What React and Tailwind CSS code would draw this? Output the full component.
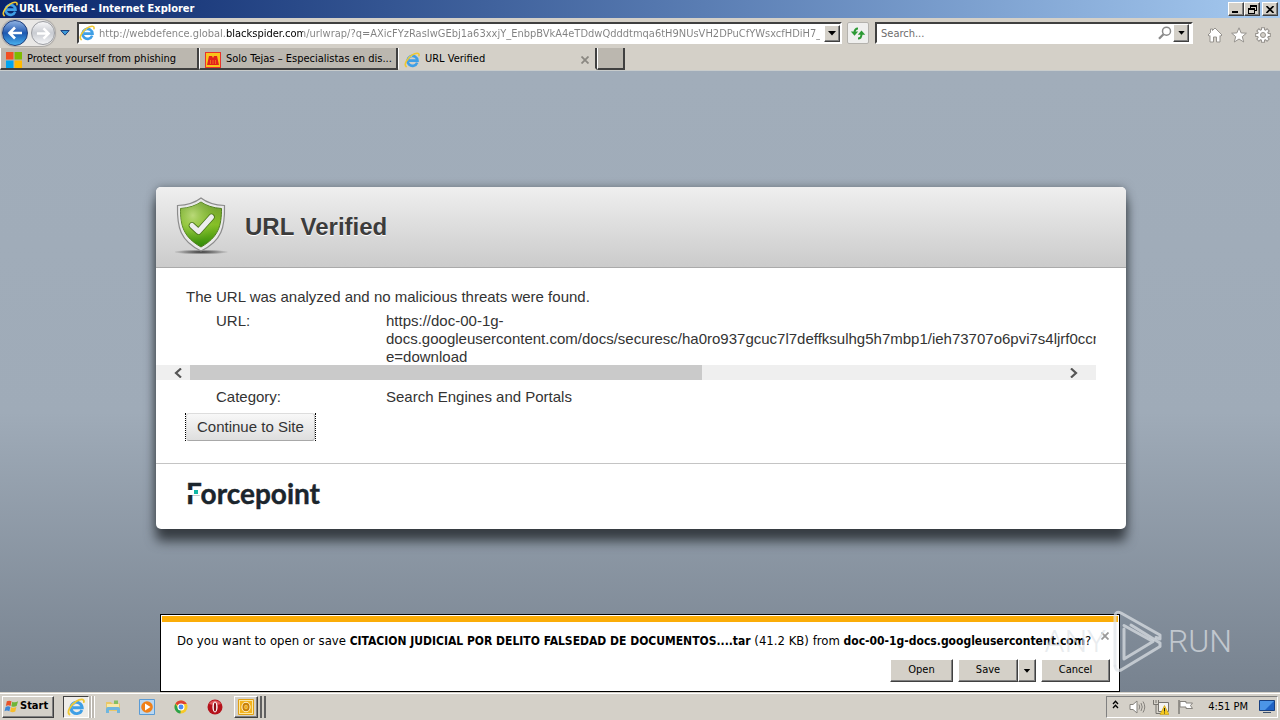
import React from "react";

const raised =
  "bg-[#d4d0c8] border border-t-white border-l-white border-r-[#404040] border-b-[#404040] shadow-[inset_-1px_-1px_0_#808080]";

const ADDRESS =
  "http://webdefence.global.blackspider.com/urlwrap/?q=AXicFYzRasIwGEbj1a63xxjY_EnbpBVkA4eTDdwQdddtmqa6tH9NUsVH2DPuCfYWsxcfHDiH7_6O_";

function IeIcon({ className }) {
  return (
    <svg viewBox="0 0 16 16" className={className} aria-hidden="true">
      <path d="M13.200 10.600A5 5 0 1 1 13.500 8.600H5" fill="none" stroke="#3f9fe6" strokeWidth="2.600" />
      <path d="M4.400 6.400A4.200 4.200 0 0 1 8 4.100" fill="none" stroke="#9bd9fa" strokeWidth="1.200" />
      <path d="M2.200 14.600C-.4 12.600 3 6.400 8 3.200C11.500 1 15.600.2 15 3.600" fill="none" stroke="#f0c832" strokeWidth="1.600" strokeLinecap="round" />
    </svg>
  );
}

function TriangleDown({ className }) {
  return (
    <svg viewBox="0 0 8 5" className={className} aria-hidden="true">
      <path d="M0 0H8L4 4.6Z" fill="currentColor" />
    </svg>
  );
}

function TitleBar() {
  return (
    <header className="flex h-[18px] items-center bg-linear-to-r from-[#0a246a] to-[#a6caf0] px-[2px]">
      <IeIcon className="size-4" />
      <h1 className="flex-1 pl-px font-['DejaVu_Sans_Condensed','DejaVu_Sans',sans-serif] text-[11px] font-bold text-white">
        URL Verified - Internet Explorer
      </h1>
      <button aria-label="Minimize" className={`${raised} flex h-[14px] w-4 items-end pb-[2px] pl-[3px]`}>
        <span className="h-[2px] w-[6px] bg-black" />
      </button>
      <button aria-label="Restore" className={`${raised} flex h-[14px] w-4 items-center justify-center`}>
        <svg viewBox="0 0 9 9" className="size-[9px]" fill="none" stroke="#000" shapeRendering="crispEdges">
          <path d="M2.5 3V.5H8.500V5.500H6M2 1.500H9" />
          <path d="M.5 3.500H6.500V8.500H.5ZM0 4.500H7" />
        </svg>
      </button>
      <button aria-label="Close" className={`${raised} ml-[2px] flex h-[14px] w-4 items-center justify-center`}>
        <svg viewBox="0 0 8 7" className="h-[7px] w-2" stroke="#000" strokeWidth="1.6">
          <path d="M.5 0L7.500 7M7.500 0L.5 7" />
        </svg>
      </button>
    </header>
  );
}

function NavigationBar() {
  return (
    <div className="flex h-[30px] items-center bg-[#d4d0c8] font-['DejaVu_Sans_Condensed','DejaVu_Sans',sans-serif] text-[11px]">
      <div className="flex w-[77px] items-center pl-[2px]">
        <div className="flex items-center rounded-full bg-[#e9e8e6] shadow-[0_0_1px_1px_#a9a7a4]">
          <button aria-label="Back" className="flex size-[26px] items-center justify-center rounded-full border border-[#1d3c78] bg-linear-to-b from-[#8fb2e2] via-[#1e58b0] to-[#49b0ee]">
            <svg viewBox="0 0 16 16" className="size-4" fill="none" stroke="#fff" strokeWidth="2.600">
              <path d="M15 8H3M8 2.500L2.500 8L8 13.500" />
            </svg>
          </button>
          <button aria-label="Forward" className="ml-[3px] flex size-6 items-center justify-center rounded-full border border-[#9b9da2] bg-linear-to-b from-[#f7f7f8] via-[#c9ccd2] to-[#f4f5f7]">
            <svg viewBox="0 0 16 16" className="size-[15px]" fill="none" stroke="#fff" strokeWidth="2.600">
              <path d="M1 8H13M8 2.500L13.500 8L8 13.500" />
            </svg>
          </button>
        </div>
        <button aria-label="Recent pages" className="ml-[5px]">
          <svg viewBox="0 0 10 6" className="h-[6px] w-[10px]">
            <path d="M.8.5H9.200L5 5.200Z" fill="#3c9ad8" stroke="#1c3f7c" />
          </svg>
        </button>
      </div>
      <div className="flex h-[22px] min-w-0 flex-1 items-center border-2 border-t-[#404040] border-r-white border-b-white border-l-[#404040] bg-white">
        <IeIcon className="size-4 shrink-0" />
        <input
          aria-label="Address"
          defaultValue={ADDRESS}
          className="ml-1 min-w-0 flex-1 bg-[linear-gradient(90deg,#808080_127px,#000_127px,#000_204px,#808080_204px)] bg-clip-text pt-[2px] text-transparent outline-none"
        />
        <button aria-label="Show address history" className={`${raised} ml-1 flex h-[17px] w-4 items-center justify-center`}>
          <TriangleDown className="h-[5px] w-2" />
        </button>
      </div>
      <button aria-label="Refresh" className="ml-[5px] flex size-[22px] items-center justify-center rounded-[2px] border border-[#b4b2ad] bg-[#efefee]">
        <svg viewBox="0 0 16 16" className="size-4" fill="none" stroke="#2c9a34" strokeWidth="2">
          <path d="M8 3.500C5.500 3.500 4.500 4.500 4.500 8" />
          <path d="M.8 6.500H8.200L4.500 10.800Z" fill="#2c9a34" stroke="none" />
          <path d="M8 13.500C10.500 13.500 11.500 12.500 11.500 9" />
          <path d="M7.800 9.800H15.200L11.500 5.500Z" fill="#2c9a34" stroke="none" />
        </svg>
      </button>
      <div className="ml-[6px] flex h-[22px] w-[318px] items-center border-2 border-t-[#404040] border-r-white border-b-white border-l-[#404040] bg-white pr-[2px]">
        <input aria-label="Search" placeholder="Search..." className="min-w-0 flex-1 pt-[2px] pl-1 outline-none placeholder:text-[#6d6d6d]" />
        <button aria-label="Start search">
          <svg viewBox="0 0 14 14" className="size-[14px]" fill="none" stroke="#8a8a8a">
            <circle cx="8.500" cy="5.200" r="4" strokeWidth="1.500" />
            <path d="M5.500 8.200L1 12.800" strokeWidth="2.200" />
          </svg>
        </button>
        <button aria-label="Search options" className={`${raised} ml-px flex h-[18px] w-4 items-center justify-center`}>
          <TriangleDown className="h-1 w-[7px]" />
        </button>
      </div>
      <nav className="flex w-[87px] items-center gap-2 pt-1 pl-[14px]">
        <button aria-label="Home">
          <svg viewBox="0 0 16 16" className="size-4" fill="#fff" stroke="#96938e" strokeLinejoin="round">
            <path d="M8 1L15 8L13.800 9.200L13 8.500V15H9.500V10H6.500V15H3V8.500L2.200 9.200L1 8L3.500 5.500V2H5.500V3.500Z" />
          </svg>
        </button>
        <button aria-label="Favorites">
          <svg viewBox="0 0 16 16" className="size-4" fill="#fff" stroke="#96938e" strokeLinejoin="round">
            <path d="M8 .8L10.100 5.900L15.400 6.200L11.300 9.600L12.700 15L8 12L3.300 15L4.700 9.600L.6 6.200L5.900 5.900Z" />
          </svg>
        </button>
        <button aria-label="Tools">
          <svg viewBox="0 0 16 16" className="size-4">
            <g stroke="#96938e" strokeWidth="4">
              <path d="M8 .2V15.800M.2 8H15.800M2.500 2.500L13.500 13.500M13.500 2.500L2.500 13.500" />
            </g>
            <circle cx="8" cy="8" r="6" fill="#96938e" />
            <g stroke="#fff" strokeWidth="2">
              <path d="M8 1.200V14.800M1.200 8H14.800M3.200 3.200L12.800 12.800M12.800 3.200L3.200 12.800" />
            </g>
            <circle cx="8" cy="8" r="5" fill="#fff" />
            <circle cx="8" cy="8" r="2.500" fill="#d4d0c8" stroke="#96938e" />
          </svg>
        </button>
      </nav>
    </div>
  );
}

function TabStrip() {
  const tab =
    "flex h-[22px] items-center gap-[5px] border-r-2 border-b-2 border-l border-l-white border-r-[#404040] pt-[3px] text-left whitespace-nowrap";
  return (
    <div role="tablist" className="flex h-[23px] items-start border-b border-[#c8cccc] bg-[#d4d0c8] font-['DejaVu_Sans_Condensed','DejaVu_Sans',sans-serif] text-[11px]">
      <button role="tab" aria-selected="false" className={`${tab} w-[199px] border-b-[#404040] bg-[#bbb7af] pl-[5px]`}>
        <svg viewBox="0 0 16 16" className="size-4">
          <path d="M0 0H7.500V7.500H0Z" fill="#f25022" />
          <path d="M8.500 0H16V7.500H8.500Z" fill="#7fba00" />
          <path d="M0 8.500H7.500V16H0Z" fill="#00a4ef" />
          <path d="M8.500 8.500H16V16H8.500Z" fill="#ffb900" />
        </svg>
        Protect yourself from phishing
      </button>
      <button role="tab" aria-selected="false" className={`${tab} w-[199px] border-b-[#404040] bg-[#bbb7af] pl-[5px]`}>
        <svg viewBox="0 0 16 16" className="size-4">
          <path d="M0 0H16V16H0Z" fill="#e8332a" />
          <path d="M1 1H15V15H1Z" fill="#f9c41b" />
          <path d="M2 13L4 4H7L8 6L9 4H12L14 13Z" fill="#e2211c" />
          <path d="M5.500 12V8M8 12V8M10.500 12V8" stroke="#f58a1f" strokeWidth=".7" />
        </svg>
        Solo Tejas – Especialistas en dis...
      </button>
      <button role="tab" aria-selected="true" className={`${tab} w-[199px] border-b-transparent bg-[#d4d0c8] pl-[5px]`}>
        <IeIcon className="size-4" />
        <span className="flex-1">URL Verified</span>
        <svg viewBox="0 0 8 8" className="mr-[6px] size-2" stroke="#8b8882" strokeWidth="1.800">
          <path d="M.5.5L7.500 7.500M7.500.5L.5 7.500" />
        </svg>
      </button>
      <button aria-label="New tab" className={`${tab} w-[28px] border-b-[#404040] bg-[#bbb7af]`} />
    </div>
  );
}

function Shield() {
  return (
    <svg viewBox="0 0 54 60" className="h-[60px] w-[54px]" aria-hidden="true">
      <defs>
        <linearGradient id="shieldFill" x1="0" y1="0" x2="0" y2="1">
          <stop offset="0" stopColor="#6f9a35" />
          <stop offset=".5" stopColor="#86bf25" />
          <stop offset="1" stopColor="#2f8a08" />
        </linearGradient>
        <radialGradient id="shieldShine" cx=".3" cy=".3" r=".6">
          <stop offset="0" stopColor="#c9e38c" stopOpacity=".8" />
          <stop offset="1" stopColor="#8cc63f" stopOpacity="0" />
        </radialGradient>
        <radialGradient id="shieldShadow">
          <stop offset="0" stopColor="#222" stopOpacity=".9" />
          <stop offset="1" stopColor="#222" stopOpacity="0" />
        </radialGradient>
      </defs>
      <ellipse cx="26" cy="57" rx="28" ry="2.500" fill="url(#shieldShadow)" />
      <path d="M26 3C31 7 39 10 49.500 10.500C50 32 47 46 26 56C5 46 2 32 2.500 10.500C13 10 21 7 26 3Z" fill="#e9e9e9" stroke="#8b8b8b" strokeWidth="1.200" />
      <path d="M26 7C31 10.500 38 13 46.500 13.500C46.500 31 43.500 42 26 52C8.500 42 5.500 31 5.500 13.500C14 13 21 10.500 26 7Z" fill="url(#shieldFill)" stroke="#4f7d1c" />
      <path d="M26 7C31 10.500 38 13 46.500 13.500C46.500 31 43.500 42 26 52C8.500 42 5.500 31 5.500 13.500C14 13 21 10.500 26 7Z" fill="url(#shieldShine)" />
      <path d="M17 30.500L23.500 36.500L36.500 22" fill="none" stroke="#4a741b" strokeWidth="6.500" strokeLinecap="round" strokeLinejoin="round" />
      <path d="M17 30.500L23.500 36.500L36.500 22" fill="none" stroke="#ededed" strokeWidth="5" strokeLinecap="round" strokeLinejoin="round" />
    </svg>
  );
}

function ForcepointLogo() {
  return (
    <div className="relative inline-block align-top">
      <span className="block font-['Lato',sans-serif] text-[28px] leading-8 font-bold text-[#1b252d] [-webkit-text-stroke:0.4px_#1b252d]">
        Forcepoint
      </span>
      <svg viewBox="0 0 16 6" className="absolute top-[13px] left-0 h-[6px] w-4" aria-hidden="true">
        <path d="M0 0H15V5H0Z" fill="#fff" />
        <path d="M8 0H12V4H8Z" fill="#10b8a6" />
      </svg>
    </div>
  );
}

function VerifiedCard() {
  return (
    <section className="mx-auto mt-[116px] w-full max-w-[970px] rounded-[5px] bg-white font-['Liberation_Sans',Arial,sans-serif] text-[15px] leading-[18px] text-[#333] shadow-[0_12px_12px_#363c42,0_0_8px_#6c747d]">
      <header className="flex items-center gap-[16px] rounded-t-[5px] border-b border-[#aaa] bg-linear-to-b from-[#efefef] to-[#cbcbcb] pt-2 pb-3 pl-[19px]">
        <Shield />
        <h2 className="pt-1 text-2xl font-bold text-[#3c3c3c] [text-shadow:0_1px_0_#fff]">URL Verified</h2>
      </header>
      <div className="border-b border-[#c4c4c4] pt-5 pb-[22px]">
        <p className="pl-[30px]">The URL was analyzed and no malicious threats were found.</p>
        <div className="mr-[30px] mt-[6px]">
          <dl className="flex overflow-hidden pl-[60px]">
            <dt className="w-[170px] shrink-0">URL:</dt>
            <dd className="whitespace-nowrap">
              https://doc-00-1g-
              <br />
              docs.googleusercontent.com/docs/securesc/ha0ro937gcuc7l7deffksulhg5h7mbp1/ieh73707o6pvi7s4ljrf0ccm
              <br />
              e=download
            </dd>
          </dl>
          <div className="-mt-px flex h-[15px] items-center bg-[#efefef]">
            <button aria-label="Scroll left" className="flex w-[34px] justify-end pr-2">
              <svg viewBox="0 0 8 10" className="h-[10px] w-2" fill="none" stroke="#555" strokeWidth="2.200">
                <path d="M7 .5L2 5L7 9.500" />
              </svg>
            </button>
            <div className="h-full flex-1">
              <div className="h-full w-[59%] bg-[#cacaca]" />
            </div>
            <button aria-label="Scroll right" className="flex w-[38px] pl-3">
              <svg viewBox="0 0 8 10" className="h-[10px] w-2" fill="none" stroke="#555" strokeWidth="2.200">
                <path d="M1 .5L6 5L1 9.500" />
              </svg>
            </button>
          </div>
        </div>
        <dl className="mt-2 flex pl-[60px]">
          <dt className="w-[170px]">Category:</dt>
          <dd>Search Engines and Portals</dd>
        </dl>
        <button className="mt-[7px] ml-[29px] border-x border-dotted border-black">
          <span className="block rounded-[3px] border border-t-[#ddd] border-r-[#c4c4c4] border-b-[#a8a8a8] border-l-[#ddd] bg-linear-to-b from-[#f8f8f8] to-[#dedede] px-[10px] py-1">
            Continue to Site
          </span>
        </button>
      </div>
      <footer className="px-[30px] pt-[13px] pb-5">
        <ForcepointLogo />
      </footer>
    </section>
  );
}

function DownloadBar() {
  return (
    <section aria-label="Download" className="mx-auto mt-auto w-full max-w-[960px] border border-black bg-white px-px pt-px pb-[9px] font-['DejaVu_Sans_Condensed','DejaVu_Sans',sans-serif] text-[11px] text-black">
      <div className="h-[6px] bg-[#fbad08]" />
      <div className="flex items-start pt-[10px] pl-[15px] pr-[9px]">
        <p className="flex-1 text-[13px] leading-[18px] whitespace-nowrap">
          Do you want to open or save <b className="text-[12px]">CITACION JUDICIAL POR DELITO FALSEDAD DE DOCUMENTOS....tar</b> (41.2 KB) from{" "}
          <b className="text-[12px]">doc-00-1g-docs.googleusercontent.com</b>?
        </p>
        <button aria-label="Close notification">
          <svg viewBox="0 0 8 8" className="size-2" stroke="#999" strokeWidth="1.800">
            <path d="M.5.5L7.500 7.500M7.500.5L.5 7.500" />
          </svg>
        </button>
      </div>
      <div className="flex justify-end pt-[9px] pr-2">
        <button className={`${raised} h-[23px] w-[63px]`}>Open</button>
        <button className={`${raised} ml-[5px] h-[23px] w-[60px]`}>Save</button>
        <button aria-label="Save options" className={`${raised} flex h-[23px] w-[18px] items-center justify-center`}>
          <TriangleDown className="h-1 w-2" />
        </button>
        <button className={`${raised} ml-[5px] h-[23px] w-[69px]`}>Cancel</button>
      </div>
    </section>
  );
}

function Watermark() {
  return (
    <div className="pointer-events-none absolute right-[48px] bottom-[47px] flex items-center gap-[3px] font-['Roboto',sans-serif] text-[32px] leading-none font-light text-[#e0e4e8]/70">
      <span>ANY</span>
      <svg viewBox="0 0 56 64" className="h-16 w-14" fill="none" stroke="currentColor" strokeWidth="3" strokeLinecap="round" strokeLinejoin="round">
        <path d="M15 20V50L44 32.500L15 16.500M6 57V7Q6.500 1.500 12 4L51 26V30L47 28.500" />
        <path d="M22 16L51 34V37.500L12 61Q6.500 63 6 57" />
      </svg>
      <span>RUN</span>
    </div>
  );
}

function Taskbar() {
  return (
    <footer className="flex h-7 items-center border-t border-[#d4d0c8] bg-[#d4d0c8] pl-[2px] font-['DejaVu_Sans_Condensed','DejaVu_Sans',sans-serif] text-[11px] text-black shadow-[inset_0_1px_0_#fff]">
      <button className={`${raised} flex h-[22px] w-[52px] items-center gap-px pl-px font-bold`}>
        <svg viewBox="0 0 16 16" className="size-[15px]">
          <path d="M3 2.500Q5.500 1 8 2.500L7 7.500Q4.500 6 2 7.500Z" fill="#e8532a" />
          <path d="M8.800 2.800Q11.500 4.300 15 2.500L13.500 7.500Q11 9 7.800 7.800Z" fill="#6fb53a" />
          <path d="M1.700 8.500Q4.500 7 6.800 8.500L5.700 13Q3 11.500.5 13Z" fill="#3e87d6" />
          <path d="M7.600 8.700Q10.500 10 13.200 8.500L12 13.300Q9 14.800 6.500 13.300Z" fill="#f7bd2c" />
        </svg>
        Start
      </button>
      <div className="ml-[9px] flex items-center">
        <button aria-label="Internet Explorer" className="flex h-[22px] w-[26px] items-center justify-center border border-t-[#404040] border-r-white border-b-white border-l-[#404040] bg-[#efede9]">
          <IeIcon className="size-[18px]" />
        </button>
        <span className="h-[22px] w-[3px] border-r border-white bg-[#bdb9b2]" />
        <span className="h-[22px] w-[3px] border-r border-white bg-[#bdb9b2]" />
      </div>
      <div className="ml-[10px] flex items-center gap-[18px]">
        <button aria-label="File Explorer">
          <svg viewBox="0 0 16 16" className="size-4">
            <path d="M1 3H6L7 4.500H15V12H1Z" fill="#e9c768" />
            <path d="M2 5H14V8H2Z" fill="#f7e9a8" />
            <path d="M1 14V10Q1 8 3 8H13Q15 8 15 10V14H12V11H4V14Z" fill="#6fb6de" />
            <path d="M9 1.500H13V5H9Z" fill="#84bf60" />
          </svg>
        </button>
        <button aria-label="Media Player">
          <svg viewBox="0 0 16 16" className="size-4">
            <path d="M.5.5H15.500V15.500H.5Z" fill="#b9d7f2" stroke="#5a9bd5" />
            <circle cx="8" cy="8" r="5.800" fill="#f08019" />
            <path d="M6 4.500L11.500 8L6 11.500Z" fill="#fff" />
          </svg>
        </button>
        <button aria-label="Chrome">
          <svg viewBox="0 0 16 16" className="size-4">
            <circle cx="8" cy="8" r="6.500" fill="#f7c928" />
            <path d="M8 8L2.400 4.700A6.500 6.500 0 0 1 13.800 5H8Z" fill="#dd4033" />
            <path d="M8 8L7.400 14.500A6.500 6.500 0 0 1 2.400 4.700L5.400 9.500Z" fill="#2ba24c" />
            <circle cx="8" cy="8" r="3" fill="#4a8af4" stroke="#fff" strokeWidth="1.100" />
          </svg>
        </button>
        <button aria-label="Opera">
          <svg viewBox="0 0 16 16" className="size-4">
            <circle cx="8" cy="8" r="7.500" fill="#b5121b" />
            <path d="M2 5A7 7 0 0 1 14 5Q8 7 2 5Z" fill="#e0575b" />
            <ellipse cx="8" cy="8" rx="2.600" ry="5.400" fill="#fff" />
            <ellipse cx="8" cy="8" rx="1.200" ry="4.600" fill="#8c0d14" />
          </svg>
        </button>
      </div>
      <div className="ml-[11px] flex items-center">
        <button aria-label="Outlook" className={`${raised} flex h-[22px] w-6 items-center justify-center`}>
          <svg viewBox="0 0 16 16" className="size-4">
            <path d="M.5.5H15.500V15.500H.5Z" fill="#fbe7a2" stroke="#e2a012" />
            <path d="M2 2H14V14H2Z" fill="#f3b21d" />
            <ellipse cx="8" cy="8" rx="3" ry="3.600" fill="#f3b21d" stroke="#fff6d8" strokeWidth="3.200" />
            <ellipse cx="8" cy="8" rx="2.600" ry="3.200" fill="none" stroke="#c87f05" strokeWidth="2" />
          </svg>
        </button>
        <span className="h-[22px] w-1 border-r-2 border-[#606060]" />
        <span className="h-[22px] w-1 border-r-2 border-[#606060]" />
      </div>
      <div className="mr-[2px] ml-auto flex h-[22px] w-[172px] items-center border border-t-[#808080] border-r-white border-b-white border-l-[#808080] pl-[5px] pr-[2px]">
        <svg viewBox="0 0 7 9" className="mb-1 h-[9px] w-[7px]" fill="none" stroke="#000" strokeWidth="1.300">
          <path d="M1 4L3.500 1.200L6 4M1 8L3.500 5.200L6 8" />
        </svg>
        <svg viewBox="0 0 17 16" className="ml-[10px] h-4 w-[17px]" fill="none" stroke="#85827d">
          <path d="M1 5.500H4L8 2V14L4 10.500H1Z" fill="#fff" />
          <path d="M10 5.500Q11.500 8 10 10.500M12 4Q14.500 8 12 12M14 2.500Q17.500 8 14 13.500" />
        </svg>
        <svg viewBox="0 0 16 16" className="ml-[7px] size-4" fill="#f4f3f1" stroke="#77746f">
          <path d="M5.500 3.500H15.500V12.500H5.500Z" />
          <path d="M.5 1V5.500H5.500V1M3 5.500V14.500H8M3 1V4" fill="none" />
          <path d="M11.500 6.500L16 15.500H7Z" fill="#f5c91e" stroke="#c69a0c" strokeWidth=".6" />
          <path d="M11.500 9V12.500M11.500 13.500V14.500" stroke="#222" />
        </svg>
        <svg viewBox="0 0 17 16" className="ml-2 h-4 w-[17px]" fill="#fff" stroke="#85827d">
          <path d="M3 2.500H9V4H15.500L13.500 6.500L15.500 9.500H9V8H3Z" />
          <path d="M2 1V15" strokeWidth="1.600" />
        </svg>
        <time className="ml-auto pt-px">4:51 PM</time>
        <svg viewBox="0 0 16 14" className="ml-[11px] h-[14px] w-4">
          <path d="M.5.500H15.500V10.500H.5Z" fill="#1f62c4" stroke="#173f80" />
          <path d="M1 1H15L6 10H1Z" fill="#4c95e6" />
          <path d="M4 12.500H12" stroke="#3c4f6b" />
        </svg>
      </div>
    </footer>
  );
}

export default function App() {
  return (
    <div className="relative flex min-h-screen flex-col overflow-hidden">
      <TitleBar />
      <NavigationBar />
      <TabStrip />
      <main className="flex flex-1 flex-col bg-linear-to-b from-[#a1adba] via-[#9fabb8] via-55% to-[#77828f]">
        <div className="pl-[2px]">
          <VerifiedCard />
        </div>
        <DownloadBar />
      </main>
      <Taskbar />
      <Watermark />
    </div>
  );
}
